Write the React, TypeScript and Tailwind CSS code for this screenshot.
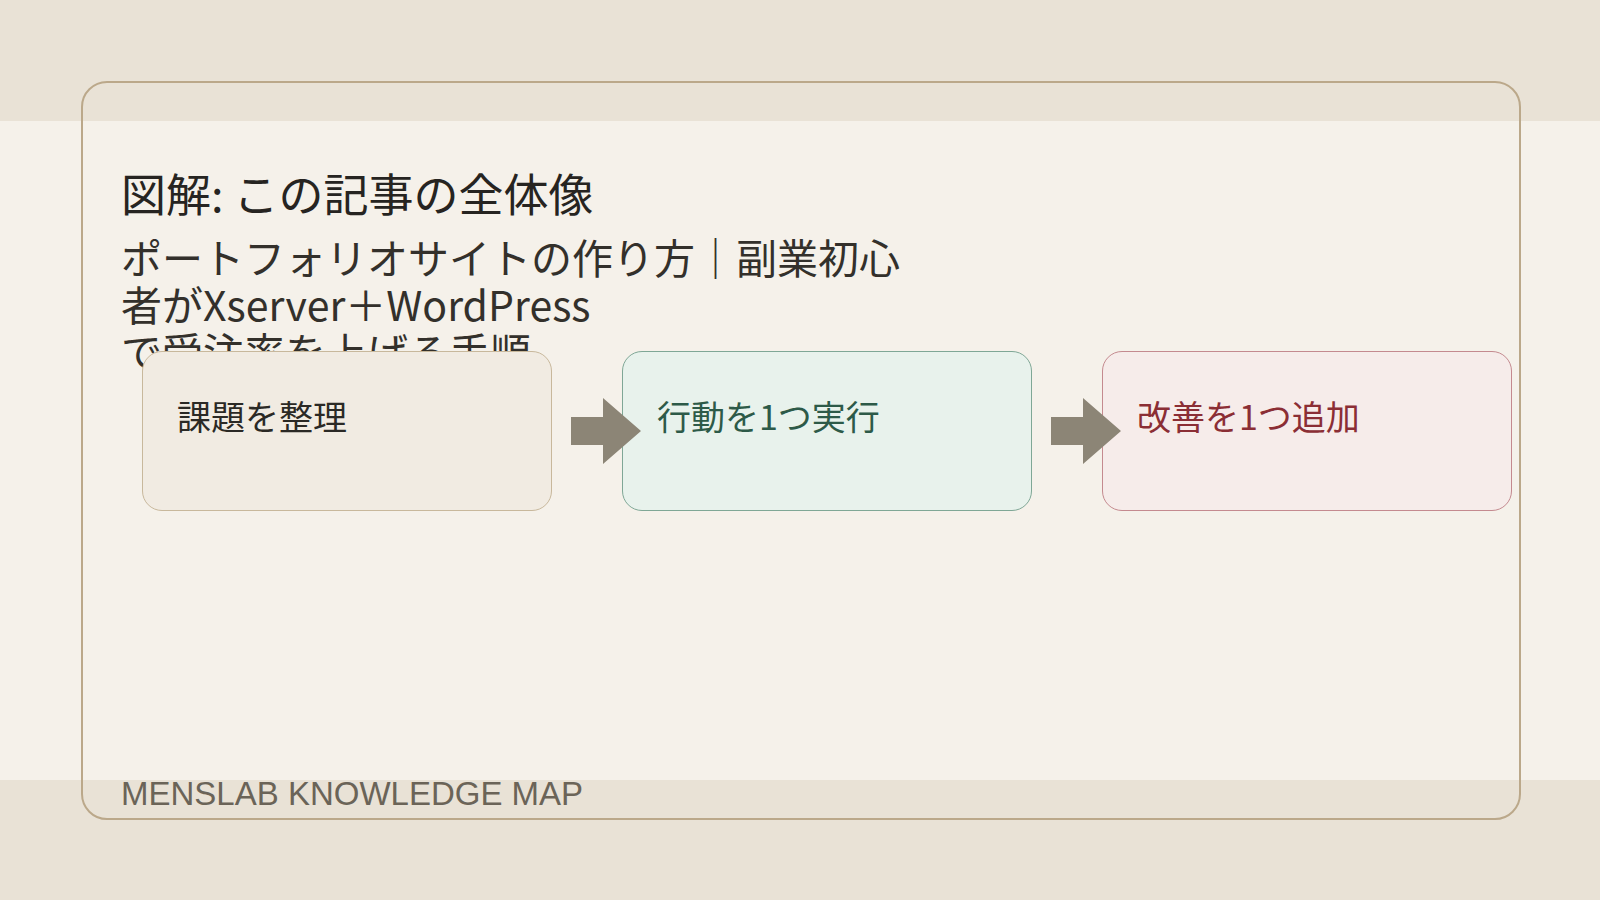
export default function App() {
  const jp = { fontFamily: '"Noto Sans CJK JP", "Noto Sans", sans-serif' };
  const Arrow = () => (
    <div className="w-[70px] h-[66px] relative shrink-0">
      <svg width="72" height="66" viewBox="0 0 72 66" className="absolute left-[19px] top-0">
        <polygon points="0,19 32,19 32,0 70,33 32,66 32,47 0,47" fill="#8c8576" />
      </svg>
    </div>
  );
  return (
    <div
      className="w-[1600px] h-[900px] overflow-hidden bg-[linear-gradient(#e9e2d6_0_121px,#f5f1ea_121px_780px,#e9e2d6_780px)] pt-[81px] pl-[81px]"
      style={jp}
    >
      <div className="w-[1440px] h-[739px] rounded-[26px] border-2 border-[#bba88a] flex flex-col">
        <div className="pl-[38px] pt-[84px] h-[278px]">
          <div className="text-[45px] leading-[52px] text-[#262421]">図解: この記事の全体像</div>
          <div className="mt-[14px] text-[41px] leading-[47px] text-[#33302b] whitespace-nowrap">
            ポートフォリオサイトの作り方｜副業初心<br />者がXserver＋WordPress<br />で受注率を上げる手順
          </div>
        </div>
        <div className="flex items-center pl-[59px] -mt-[10px]">
          <div className="w-[410px] h-[160px] rounded-[20px] border border-[#c8b89c] bg-[#f1ebe2] px-[34px] pt-[43px] text-[34px] leading-[42px] text-[#2b2925]">課題を整理</div>
          <Arrow />
          <div className="w-[410px] h-[160px] rounded-[20px] border border-[#7fa796] bg-[#e8f2ec] px-[34px] pt-[43px] text-[34px] leading-[42px] text-[#2d5a48]">行動を1つ実行</div>
          <Arrow />
          <div className="w-[410px] h-[160px] rounded-[20px] border border-[#c48a8f] bg-[#f6ecea] px-[34px] pt-[43px] text-[34px] leading-[42px] text-[#8b2e35]">改善を1つ追加</div>
        </div>
        <div className="mt-auto pl-[38px] pb-[4px] text-[33px] leading-[40px] text-[#6b6458]" style={{ fontFamily: '"Liberation Sans", Arial, sans-serif' }}>
          MENSLAB KNOWLEDGE MAP
        </div>
      </div>
    </div>
  );
}
